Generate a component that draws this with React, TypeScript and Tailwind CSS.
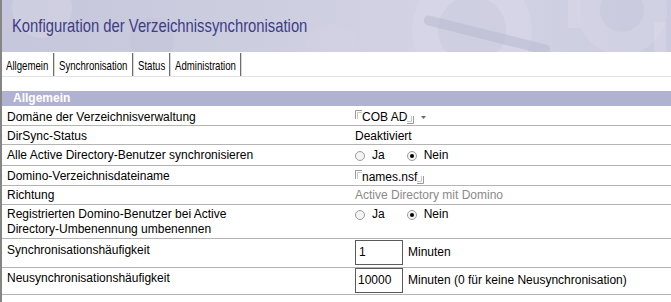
import React from "react";

const Bracket = ({ end }: { end?: boolean }) =>
  end ? (
    <svg width="7" height="8" viewBox="0 0 7 8" className="self-end mb-[1px]">
      <path d="M6.5 0 V7.5 H0" fill="none" stroke="#9a9a9a" strokeWidth="1" />
      <path d="M4.5 0 V5.5 H0" fill="none" stroke="#c8c8c8" strokeWidth="1" />
    </svg>
  ) : (
    <svg width="7" height="9" viewBox="0 0 7 9" className="self-start mt-[1px]">
      <path d="M0.5 9 V0.5 H7" fill="none" stroke="#9a9a9a" strokeWidth="1" />
      <path d="M2.5 9 V2.5 H7" fill="none" stroke="#c8c8c8" strokeWidth="1" />
    </svg>
  );

const Radio = ({ checked }: { checked?: boolean }) => (
  <span className="w-[10px] h-[10px] rounded-full border border-[#9c9c9c] bg-[#f4f4f4] inline-flex items-center justify-center shrink-0">
    {checked && <span className="w-[4px] h-[4px] rounded-full bg-black" />}
  </span>
);

const RadioPair = () => (
  <div className="flex items-center h-[15px]">
    <Radio />
    <span className="ml-[7px]">Ja</span>
    <span className="ml-[22px] flex items-center">
      <Radio checked />
      <span className="ml-[7px]">Nein</span>
    </span>
  </div>
);

const Row = ({
  h,
  label,
  children,
  align = "items-center pt-[3px]",
  pt = "",
}: {
  h: string;
  label: React.ReactNode;
  children?: React.ReactNode;
  align?: string;
  pt?: string;
}) => (
  <div className={`flex ${align} ${h} border-b border-[#b4b4b4] ${pt}`}>
    <div className="w-[353px] pl-[5px] shrink-0 leading-[15px]">{label}</div>
    <div className="flex-1 flex items-center leading-[15px]">{children}</div>
  </div>
);

const tabs = [
  { t: "Allgemein", w: "w-[51px]" },
  { t: "Synchronisation", w: "w-[77px]" },
  { t: "Status", w: "w-[35px]" },
  { t: "Administration", w: "w-[69px]" },
];

export default function App() {
  return (
    <div
      className="w-[671px] h-[302px] bg-white border-l-2 border-[#858585] text-[12px] text-black overflow-hidden"
      style={{ fontFamily: '"Liberation Sans", Arial, sans-serif' }}
    >
      {/* Header */}
      <div className="relative h-[52px] bg-[linear-gradient(90deg,#c6c6dc_0%,#cdcde0_35%,#d3d3e5_70%,#cbcbdf_100%)] overflow-hidden flex items-center pl-[10px]">
        <svg className="absolute inset-0" width="671" height="52" viewBox="0 0 671 52">
          <circle cx="40" cy="8" r="30" fill="#d6d6e6" opacity="0.45" />
          <circle cx="150" cy="40" r="22" fill="#babad2" opacity="0.25" />
          <circle cx="470" cy="30" r="60" fill="#dadaea" opacity="0.45" />
          <circle cx="470" cy="30" r="34" fill="#c6c6da" opacity="0.4" />
          <rect x="420" y="30" width="130" height="10" rx="5" fill="#b4b4cc" opacity="0.45" transform="rotate(14 485 35)" />
          <circle cx="620" cy="10" r="45" fill="#d8d8e8" opacity="0.45" />
          <circle cx="620" cy="10" r="22" fill="#c4c4d8" opacity="0.4" />
          <rect x="566" y="0" width="12" height="28" fill="#dcdcea" opacity="0.4" />
          <rect x="652" y="22" width="12" height="30" fill="#dcdcea" opacity="0.4" />
          <circle cx="330" cy="52" r="28" fill="#d2d2e4" opacity="0.4" />
        </svg>
        <span className="relative inline-block origin-left [transform:scaleX(0.8)] whitespace-nowrap text-[18.5px] leading-[22px] text-[#3d3d86] mt-[-1px]">
          Konfiguration der Verzeichnissynchronisation
        </span>
      </div>

      {/* Tabs */}
      <div className="h-[25px] border-b border-[#e2e2e2] flex items-end">
        {tabs.map((tab) => (
          <div key={tab.t} className="flex items-stretch h-[23px]">
            <div className={`${tab.w} pl-[4px] pt-[2px] flex items-center whitespace-nowrap`}>
              <span className="inline-block origin-left [transform:scaleX(0.74)] text-[13px]">{tab.t}</span>
            </div>
            <div className="w-[2px] border-l border-[#6e6e6e] border-r border-r-[#d6d6d6]" />
          </div>
        ))}
      </div>

      <div className="h-[14px]" />

      {/* Section bar */}
      <div className="h-[15px] bg-[#b1b1d1] flex items-center pl-[11px]">
        <span className="text-white font-bold text-[12px] leading-[15px]">Allgemein</span>
      </div>

      <Row h="h-[20px]" label="Domäne der Verzeichnisverwaltung">
        <div className="flex items-stretch h-[16px]">
          <Bracket />
          <span className="leading-[16px]">COB AD</span>
          <Bracket end />
          <svg width="12" height="16" viewBox="0 0 12 16" className="ml-[4px]">
            <path d="M3 7 H8 L5.5 10 Z" fill="#6a6a6a" />
          </svg>
        </div>
      </Row>
      <Row h="h-[19px]" align="items-center pt-[2px]" label="DirSync-Status">
        <span>Deaktiviert</span>
      </Row>
      <Row h="h-[21px]" align="items-center pt-[1px]" label="Alle Active Directory-Benutzer synchronisieren">
        <RadioPair />
      </Row>
      <Row h="h-[20px]" align="items-center pt-[2px]" label="Domino-Verzeichnisdateiname">
        <div className="flex items-stretch h-[16px]">
          <Bracket />
          <span className="leading-[16px]">names.nsf</span>
          <Bracket end />
        </div>
      </Row>
      <Row h="h-[19px]" align="items-center pt-[1px]" label="Richtung">
        <span className="text-[#8a8a8a]">Active Directory mit Domino</span>
      </Row>
      <Row
        h="h-[34px]"
        align="items-start"
        pt="pt-[2px]"
        label={
          <>
            Registrierten Domino-Benutzer bei Active
            <br />
            Directory-Umbenennung umbenennen
          </>
        }
      >
        <RadioPair />
      </Row>
      <Row
        h="h-[29px]"
        align="items-start"
        pt="pt-[1px]"
        label={<div className="pt-[3px]">Synchronisationshäufigkeit</div>}
      >
        <div className="flex items-center">
          <div className="w-[48px] h-[25px] border border-[#5a5a5a] pl-[3px] flex items-center">1</div>
          <span className="ml-[5px]">Minuten</span>
        </div>
      </Row>
      <Row
        h="h-[27px]"
        align="items-start"
        label={<div className="pt-[3px]">Neusynchronisationshäufigkeit</div>}
      >
        <div className="flex items-center">
          <div className="w-[48px] h-[25px] border border-[#5a5a5a] pl-[2px] flex items-center">10000</div>
          <span className="ml-[5px]">Minuten (0 für keine Neusynchronisation)</span>
        </div>
      </Row>
    </div>
  );
}
